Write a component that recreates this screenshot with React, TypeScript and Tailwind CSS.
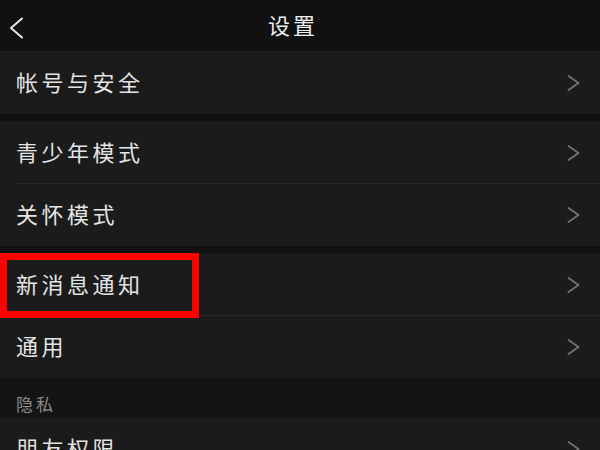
const FONT = { fontFamily: '"Noto Sans CJK SC", "Noto Sans", sans-serif' };

function Chevron() {
  return (
    <svg className="mt-[3px] h-[16px] w-[13px] text-[#737373]" viewBox="0 0 13 16" fill="none" stroke="currentColor" strokeWidth={1.8} strokeLinecap="round" strokeLinejoin="round">
      <polyline points="1.5 1 11.5 8 1.5 15" />
    </svg>
  );
}

function Row({ label, divider = false }: { label: string; divider?: boolean }) {
  return (
    <div className="relative flex h-[62px] items-center justify-between bg-[#1b1b1b] pb-[3px] pl-4 pr-[20px]">
      <span className="text-[22px] tracking-[3.5px] text-[#e4e4e4]">{label}</span>
      <Chevron />
      {divider && <div className="absolute bottom-0 left-4 right-0 h-px bg-[#262626]" />}
    </div>
  );
}

export default function App() {
  return (
    <div className="relative h-[450px] w-[600px] overflow-hidden bg-[#111111]" style={FONT}>
      {/* Header */}
      <div className="relative flex h-[52px] items-center justify-center border-b border-[#1c1c1c] bg-[#111111] pb-[2px]">
        <button className="absolute left-[9px] top-[17px] flex items-center justify-center text-[#e6e6e6]">
          <svg className="h-[22px] w-[15px]" viewBox="0 0 15 22" fill="none" stroke="currentColor" strokeWidth={2} strokeLinecap="round" strokeLinejoin="round">
            <polyline points="13 1.5 2 11 13 20.5" />
          </svg>
        </button>
        <h1 className="mr-[14px] text-[22px] tracking-[3px] text-[#eeeeee]">设置</h1>
      </div>

      <Row label="帐号与安全" />
      <div className="h-[8px] border-b border-[#181818]" />

      <Row label="青少年模式" divider />
      <Row label="关怀模式" />
      <div className="h-[8px] border-b border-[#181818]" />

      <Row label="新消息通知" divider />
      <Row label="通用" />

      <div className="flex h-[40px] items-end bg-[#141414] pb-[2px] pl-4">
        <span className="text-[17px] tracking-[3px] text-[#8a8a8a]">隐私</span>
      </div>
      <Row label="朋友权限" />

      {/* highlight box */}
      <div className="absolute left-0 top-[253px] h-[65px] w-[199px] border-[7px] border-[#ff0000]" />
    </div>
  );
}
